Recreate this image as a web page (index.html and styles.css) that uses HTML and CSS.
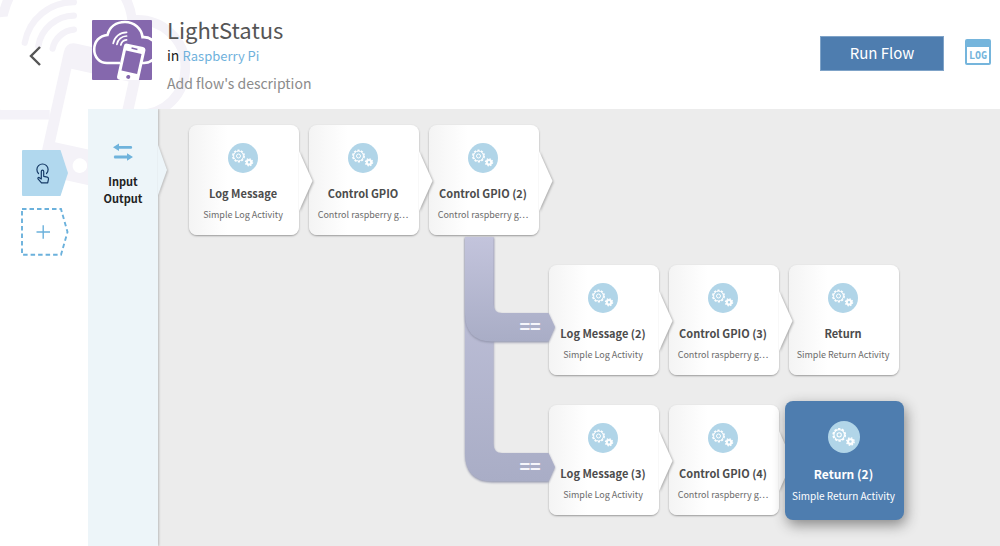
FILE: index.html
```html
<!DOCTYPE html>
<html lang="en">
<head>
<meta charset="utf-8">
<title>LightStatus</title>
<link rel="stylesheet" href="styles.css">
</head>
<body>
<svg class="defs" width="0" height="0" aria-hidden="true">
  <symbol id="app" viewBox="0 0 60 60" overflow="visible">
    <path d="M28 43H15C7.500 43 2.200 37 2.200 29.500C2.200 21.500 7.500 15.500 15.500 15C17.500 7 24 2 33 2C42 2 49.500 8.500 50.500 17.200C58.500 16.500 65 22.500 65 30C65 37.500 59.500 43 52 43H49" fill="none" stroke="currentColor" stroke-width="2.600"/>
    <path d="M21.200 23.400A13.500 13.500 0 0 1 34.600 12.300M24.900 24.300A10 10 0 0 1 34.600 16M28.800 25A6.500 6.500 0 0 1 34.600 19.800" fill="none" stroke="currentColor" stroke-width="1.700" stroke-linecap="round"/>
    <g transform="translate(32.500 23) rotate(12.500)">
      <rect class="gap" x="-1.500" y="-1.500" width="25" height="41" rx="4.500"/>
      <path fill="currentColor" fill-rule="evenodd" d="M3 0H19Q22 0 22 3V34Q22 37 19 37H3Q0 37 0 34V3Q0 0 3 0ZM3 7V27.500H19V7ZM11 30.300A2 2 0 1 0 11 34.300A2 2 0 1 0 11 30.300ZM8 2.700V4.200H14V2.700Z"/>
    </g>
  </symbol>
  <symbol id="gears" viewBox="0 0 30 30">
    <circle cx="15" cy="15" r="15" fill="#b1d5e8"/>
    <circle cx="10.500" cy="13" r="5.700" fill="none" stroke="#fff" stroke-width="1.500" stroke-dasharray="2.200 1.380" />
    <circle cx="10.500" cy="13" r="4.900" fill="none" stroke="#fff" stroke-width="1"/>
    <circle cx="10.500" cy="13" r="2" fill="none" stroke="#fff" stroke-width="1"/>
    <circle cx="21" cy="19.300" r="2.200" fill="none" stroke="#fff" stroke-width="2"/>
    <circle cx="21" cy="19.300" r="3.500" fill="none" stroke="#fff" stroke-width="1.400" stroke-dasharray="1.500 1.250"/>
  </symbol>
  <symbol id="tip" viewBox="0 0 14 62">
    <path d="M0 1L13.500 31L0 61Z" fill="#fff"/>
  </symbol>
</svg>

<svg class="watermark" aria-hidden="true"><use href="#app"/></svg>

<header class="header">
  <button class="back" aria-label="Back">
    <svg viewBox="0 0 14 20"><path d="M12 1L3 10L12 19" fill="none" stroke="#555" stroke-width="2.400"/></svg>
  </button>
  <svg class="app-icon" role="img" aria-label="Application"><use href="#app"/></svg>
  <div class="heading">
    <h1 class="title">LightStatus</h1>
    <p class="parent">in <a class="parent-link" href="#">Raspberry Pi</a></p>
    <p class="description">Add flow's description</p>
  </div>
  <button class="run">Run Flow</button>
  <button class="log">LOG</button>
</header>

<main class="main">
  <nav class="rail">
    <button class="trigger" aria-label="Trigger">
      <svg viewBox="0 0 46 46">
        <path d="M1 0H38.500L46 23L38.500 46H1Q0 46 0 45V1Q0 0 1 0Z" fill="#b1d8ee"/>
        <g fill="none" stroke="#163a66" stroke-width="1.200" stroke-linejoin="round" stroke-linecap="round">
          <path d="M16.500 23.500A5.600 5.600 0 1 1 24.500 23.500"/>
          <path d="M19.300 29V21.500Q19.300 20.200 20.500 20.200Q21.700 20.200 21.700 21.500V26.300L25.300 27.200Q26.700 27.600 26.500 29L25.700 32.800H19.500L16 28.800Q15.500 27.500 17 27.400Z"/>
        </g>
      </svg>
    </button>
    <button class="trigger" aria-label="Add trigger">
      <svg viewBox="0 0 46 48">
        <path d="M0 1H39L45.500 24L39 46.800H0Z" fill="none" stroke="#6bb1dc" stroke-width="1.900" stroke-dasharray="4.500 3"/>
        <path d="M14.500 24H28M21.200 17.200V30.800" fill="none" stroke="#6bb1dc" stroke-width="1.400"/>
      </svg>
    </button>
  </nav>
  <button class="io">
    <svg class="io-tip" viewBox="0 0 10 52" aria-hidden="true"><path d="M0 1L9 26L0 51Z" fill="#edf5f9"/></svg>
    <svg class="io-icon" viewBox="0 0 20 18" aria-hidden="true"><path d="M0 4.300L6 0.500V2.900H18.500Q20 4.300 18.500 5.700H6V8.100ZM20 14L14 10.200V12.600H1.500Q0 14 1.500 15.400H14V17.800Z" fill="#6fb3dc"/></svg>
    <span>Input</span>
    <span>Output</span>
  </button>
  <section class="stage">
    <svg class="links" viewBox="0 0 110 270" aria-hidden="true">
      <defs>
        <linearGradient id="long" x1="0" y1="0" x2="0" y2="1"><stop offset="0" stop-color="#c3c4dc"/><stop offset="1" stop-color="#a9adc6"/></linearGradient>
      </defs>
      <path class="link" d="M7 18V234Q7 262.500 34 262.500H90.500L97 248L90.500 234H44Q35.500 234 35.500 225V18Z"/>
      <path class="link" d="M7 18V94Q7 122.500 34 122.500H90.500L97 108L90.500 94H44Q35.500 94 35.500 85V18Z"/>
      <text class="operator" x="72" y="114">==</text>
      <text class="operator" x="72" y="254">==</text>
    </svg>
    <div class="row">
      <button class="card"><svg class="gears"><use href="#gears"/></svg><b class="name">Log Message</b><span class="note">Simple Log Activity</span><svg class="tip"><use href="#tip"/></svg></button>
      <button class="card"><svg class="gears"><use href="#gears"/></svg><b class="name">Control GPIO</b><span class="note">Control raspberry g…</span><svg class="tip"><use href="#tip"/></svg></button>
      <button class="card"><svg class="gears"><use href="#gears"/></svg><b class="name">Control GPIO (2)</b><span class="note">Control raspberry g…</span><svg class="tip"><use href="#tip"/></svg></button>
    </div>
    <div class="row branch">
      <button class="card"><svg class="gears"><use href="#gears"/></svg><b class="name">Log Message (2)</b><span class="note">Simple Log Activity</span><svg class="tip"><use href="#tip"/></svg></button>
      <button class="card"><svg class="gears"><use href="#gears"/></svg><b class="name">Control GPIO (3)</b><span class="note">Control raspberry g…</span><svg class="tip"><use href="#tip"/></svg></button>
      <button class="card"><svg class="gears"><use href="#gears"/></svg><b class="name">Return</b><span class="note">Simple Return Activity</span></button>
    </div>
    <div class="row branch">
      <button class="card"><svg class="gears"><use href="#gears"/></svg><b class="name">Log Message (3)</b><span class="note">Simple Log Activity</span><svg class="tip"><use href="#tip"/></svg></button>
      <button class="card"><svg class="gears"><use href="#gears"/></svg><b class="name">Control GPIO (4)</b><span class="note">Control raspberry g…</span><svg class="tip"><use href="#tip"/></svg></button>
      <button class="card selected"><svg class="gears"><use href="#gears"/></svg><b class="name">Return (2)</b><span class="note">Simple Return Activity</span></button>
    </div>
  </section>
</main>
</body>
</html>
```
FILE: styles.css
```css
* { box-sizing: border-box; }

body {
  position: relative;
  display: flex;
  flex-direction: column;
  min-height: 100vh;
  margin: 0;
  overflow-x: hidden;
  background: #fff;
  color: #222;
  font-family: "Noto Sans CJK SC", "Noto Sans", sans-serif;
}

button {
  margin: 0;
  padding: 0;
  border: 0;
  background: none;
  color: inherit;
  font-family: inherit;
  cursor: pointer;
}

h1, p { margin: 0; font-weight: 400; }

.defs { position: absolute; }
.gap { fill: none; }

.watermark {
  position: absolute;
  z-index: -1;
  top: -43px;
  left: -53px;
  width: 220px;
  height: 220px;
  overflow: visible;
  color: #f4f2f8;
}

.header {
  display: flex;
  align-items: flex-start;
  padding: 14px 9px 0 28px;
  height: 109px;
}

.back { width: 14px; height: 20px; margin: 32px 50px 0 0; }
.back svg { display: block; width: 14px; height: 20px; }

.app-icon {
  width: 60px;
  height: 60px;
  margin: 6px 15px 0 0;
  border-radius: 1px;
  background: #8568ad;
  color: #fff;
}
.app-icon .gap { fill: #8568ad; }

.heading { flex: 1; }
.title { color: #555; font-size: 22px; line-height: 30px; }
.parent { font-size: 14px; line-height: 22px; }
.parent-link { color: #6fb1dc; font-size: 13px; text-decoration: none; }
.description { margin-top: 4px; color: #8b8b8b; font-size: 14px; line-height: 24px; }

.run {
  width: 124px;
  height: 35px;
  margin: 22px 21px 0 0;
  padding-bottom: 2px;
  border: 1px solid #7fa3c8;
  background: #4e7daf;
  color: #fff;
  font-size: 15px;
  line-height: 30px;
}

.log {
  width: 26px;
  height: 26px;
  margin-top: 25px;
  padding-top: 1px;
  border: 2px solid #75b5dc;
  border-top-width: 8px;
  border-radius: 2px;
  background: #fff;
  color: #75b5dc;
  font-family: "DejaVu Sans Mono", monospace;
  font-size: 10px;
  font-weight: 700;
  line-height: 14px;
}

.main { display: flex; flex: 1; }

.rail {
  display: flex;
  flex-direction: column;
  gap: 12px;
  width: 88px;
  padding: 41px 0 0 22px;
}
.trigger { width: 46px; }
.trigger svg { display: block; width: 46px; overflow: visible; }

.io {
  position: relative;
  z-index: 1;
  display: flex;
  flex-direction: column;
  align-items: center;
  width: 70px;
  padding-top: 34px;
  background: #edf5f9;
  box-shadow: 1px 0 2px #bbb;
  clip-path: inset(0 -14px 0 0);
  font-size: 11px;
  font-weight: 700;
  line-height: 17px;
}
.io-icon { width: 20px; height: 18px; margin-bottom: 12px; }
.io-tip {
  position: absolute;
  top: 35px;
  left: 100%;
  width: 10px;
  height: 52px;
  overflow: visible;
  filter: drop-shadow(1px 1px 1px #bbb);
  clip-path: inset(-4px -4px -4px -1px);
}

.stage {
  position: relative;
  display: flex;
  flex: 1;
  flex-direction: column;
  gap: 30px;
  padding: 16px 31px 26px;
  background: #ececec;
}

.row { display: flex; gap: 10px; height: 110px; }
.branch { margin-left: 360px; }

.links {
  position: absolute;
  z-index: 1;
  top: 110px;
  left: 300px;
  width: 110px;
  height: 270px;
}
.link { fill: url(#long); filter: drop-shadow(0 1px 1px #8f92a8); }
.operator {
  fill: #f6f6fb;
  font-size: 18px;
  font-weight: 700;
  text-anchor: middle;
}

.card {
  position: relative;
  display: flex;
  flex-direction: column;
  flex: none;
  align-items: center;
  width: 110px;
  height: 110px;
  padding: 18px 2px 0 0;
  border-radius: 8px;
  background: linear-gradient(90deg, #f4f4f4, #fff 35%);
  box-shadow: 0 1px 2px #999;
  color: #4c4c4c;
  white-space: nowrap;
}
.gears { width: 30px; height: 30px; }
.name { margin-top: 10px; font-size: 11px; line-height: 20px; }
.note { margin-top: 4px; color: #6b6b6b; font-size: 9px; line-height: 16px; }

.tip {
  position: absolute;
  z-index: 1;
  top: 25px;
  left: 100%;
  width: 14px;
  height: 62px;
  overflow: visible;
  filter: drop-shadow(1px 1px 1px #aaa);
  clip-path: inset(-4px -4px -4px -1px);
}

.selected {
  z-index: 2;
  width: 119px;
  height: 119px;
  margin: -4px 0 0 -4px;
  padding-top: 20px;
  background: #4e7daf;
  box-shadow: 2px 5px 14px #888;
  color: #fff;
}
.selected .gears { width: 32px; height: 32px; }
.selected .name { margin-top: 11px; font-size: 12px; }
.selected .note { color: #fff; font-size: 10px; }
```
